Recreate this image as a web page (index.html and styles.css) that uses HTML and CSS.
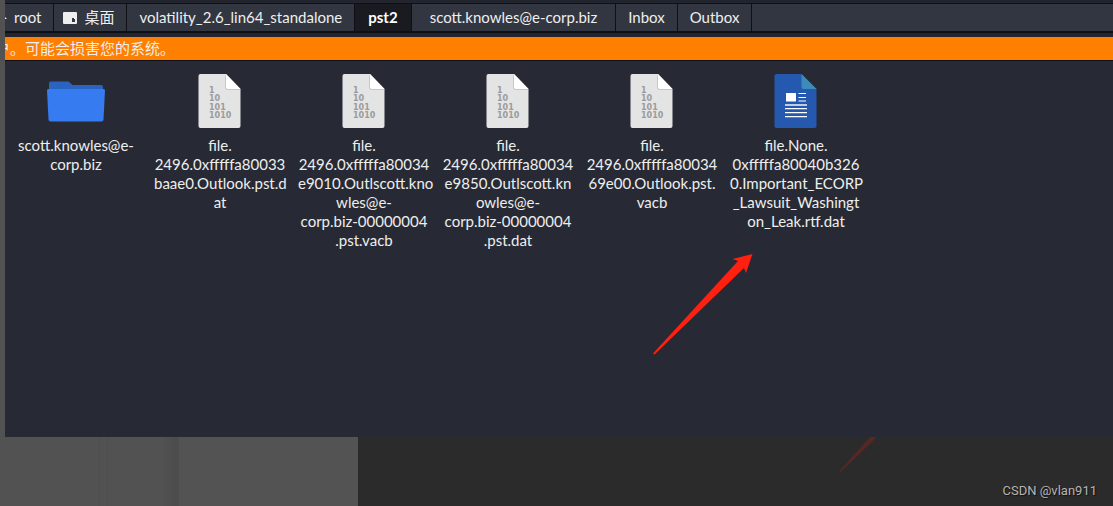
FILE: index.html
```html
<!DOCTYPE html>
<html lang="zh-CN">
<head>
<meta charset="utf-8">
<title>pst2</title>
<link rel="stylesheet" href="styles.css">
</head>
<body>
<svg class="defs" aria-hidden="true">
  <symbol id="binary" viewBox="0 0 64 64">
    <path d="M12.500 5H38l14.500 15V57a2 2 0 0 1-2 2h-38a2 2 0 0 1-2-2V7a2 2 0 0 1 2-2z" fill="#e4e4e4"/>
    <path d="M37 5.500V18a3 3 0 0 0 3 3h12.500z" fill="#c8c8c8"/>
    <path d="M38 5v13a2 2 0 0 0 2 2h12.500z" fill="#fff"/>
    <g class="digits"><text x="21" y="24">1</text><text x="21" y="32">10</text><text x="21" y="41">101</text><text x="21" y="49">1010</text></g>
  </symbol>
</svg>
<main class="window">
  <nav class="tabs">
    <button class="tab home"><svg class="house" viewBox="0 0 14 14"><path d="M7 1 0 8h2v5h4V9h2v4h4V8h2z" fill="#eee"/></svg>root</button>
    <button class="tab desk"><svg class="drive" viewBox="0 0 14 12"><path d="M1 0h12a1 1 0 0 1 1 1v10a1 1 0 0 1-1 1H1a1 1 0 0 1-1-1V1a1 1 0 0 1 1-1z" fill="#eee"/><path d="M9 6h2v1h1v3H9z" fill="#323641"/></svg>桌面</button>
    <button class="tab">volatility_2.6_lin64_standalone</button>
    <button class="tab active">pst2</button>
    <button class="tab wide">scott.knowles@e-corp.biz</button>
    <button class="tab">Inbox</button>
    <button class="tab">Outbox</button>
    <span class="rest"></span>
  </nav>
  <div class="warning"><span class="warning-text">户。可能会损害您的系统。</span></div>
  <section class="files">
    <figure class="file">
      <svg class="icon" viewBox="0 0 64 64"><path d="M5 14.500a2 2 0 0 1 2-2h17.500l4 3.500H57a2 2 0 0 1 2 2V25H5z" fill="#2b63c0"/><path d="M4.500 20h55a1.500 1.500 0 0 1 1.500 1.500l-1.500 29a2 2 0 0 1-2 2h-51a2 2 0 0 1-2-2L3 21.500A1.500 1.500 0 0 1 4.500 20z" fill="#367bf0"/></svg>
      <figcaption>scott.knowles@e-<br>corp.biz</figcaption>
    </figure>
    <figure class="file">
      <svg class="icon"><use href="#binary"/></svg>
      <figcaption>file.<br>2496.0xfffffa80033<br>baae0.Outlook.pst.d<br>at</figcaption>
    </figure>
    <figure class="file">
      <svg class="icon"><use href="#binary"/></svg>
      <figcaption>file.<br>2496.0xfffffa80034<br>e9010.Outlscott.kno<br>wles@e-<br>corp.biz-00000004<br>.pst.vacb</figcaption>
    </figure>
    <figure class="file">
      <svg class="icon"><use href="#binary"/></svg>
      <figcaption>file.<br>2496.0xfffffa80034<br>e9850.Outlscott.kn<br>owles@e-<br>corp.biz-00000004<br>.pst.dat</figcaption>
    </figure>
    <figure class="file">
      <svg class="icon"><use href="#binary"/></svg>
      <figcaption>file.<br>2496.0xfffffa80034<br>69e00.Outlook.pst.<br>vacb</figcaption>
    </figure>
    <figure class="file">
      <svg class="icon" viewBox="0 0 64 64"><path d="M12.500 5H37.500l15 15V57a2 2 0 0 1-2 2h-38a2 2 0 0 1-2-2V7a2 2 0 0 1 2-2z" fill="#2559b0"/><path d="M37.500 5v13a2 2 0 0 0 2 2h13z" fill="#3b8cba"/><g fill="#fff"><path d="M22 24h10v8.500H22zM34.500 24H42v1h-7.500zM34.500 28H42v1h-7.500zM34.500 31.500H42v1h-7.500zM21 39h22v1.200H21zM21 43h22v1.200H21zM21 47h22v1.200H21z"/><path d="M21 35h22v2H21z" opacity=".7"/></g></svg>
      <figcaption>file.None.<br>0xfffffa80040b326<br>0.Important_ECORP<br>_Lawsuit_Washingt<br>on_Leak.rtf.dat</figcaption>
    </figure>
  </section>
  <svg class="arrow" viewBox="0 0 102 102"><path d="M100.500 1 94 20l-2-5L2.500 101.500 1 100.500 86 8 80.500 6z" fill="#ff2010"/></svg>
</main>
<footer class="backdrop">
  <div class="pane first"></div>
  <div class="pane gutter"></div>
  <div class="pane third"></div>
  <div class="pane light"></div>
  <div class="dark">
    <svg class="trace" viewBox="0 0 40 36"><path d="M32 0h7L2 35.500 1 34.500z" fill="#552826"/></svg>
    <span class="credit">CSDN @vlan911</span>
  </div>
</footer>
</body>
</html>
```
FILE: styles.css
```css
* { box-sizing: border-box; }
body {
  margin: 0;
  min-height: 100vh;
  display: flex;
  flex-direction: column;
  background: #525252;
  color: #eee;
  font: 15px/19px Lato, "Noto Sans CJK SC", sans-serif;
  overflow-x: hidden;
}
.defs { position: absolute; width: 0; height: 0; }
.digits { font: bold 8px "DejaVu Sans", sans-serif; fill: #9b9b9b; }
.window {
  position: relative;
  flex: 1;
  margin-left: 5px;
  background: #272a34;
  overflow: hidden;
}
.tabs {
  display: flex;
  height: 37px;
  padding: 3px 0 4px;
  background: #23252e;
}
.tab, .rest {
  border: solid #0e1015;
  border-width: 1px 1px 2px 0;
  background: #323641;
}
.tab {
  flex: none;
  display: flex;
  align-items: center;
  padding: 0 12px;
  color: #eee;
  font: inherit;
  white-space: nowrap;
}
.home { margin-left: -12px; padding-left: 0; gap: 7px; }
.desk { padding-left: 9px; gap: 7px; }
.wide { padding: 0 18px; }
.active { padding: 0 13px; background: #191b20; font-weight: bold; color: #fff; }
.rest { flex: 1; border-right: 0; }
.house { width: 14px; height: 14px; }
.drive { width: 14px; height: 12px; }
.warning {
  height: 24px;
  display: flex;
  align-items: center;
  background: #ff7f00;
  border-bottom: 1px solid #0e1015;
  white-space: nowrap;
}
.warning-text { margin-left: -10px; }
.files {
  display: flex;
  flex-wrap: wrap;
  gap: 12px;
  padding: 8px 5px;
}
.file { width: 132px; margin: 0; text-align: center; }
.icon { display: block; width: 64px; height: 64px; margin: 0 auto 3px; }
.file figcaption { white-space: nowrap; }
.arrow {
  position: absolute;
  left: 647px;
  top: 253px;
  width: 102px;
  height: 102px;
}
.backdrop { display: flex; height: 69px; }
.pane { border-right: 1px solid #4e4e4e; }
.first { width: 100px; }
.gutter { width: 8px; }
.third { width: 71px; background: linear-gradient(90deg, #525252 75%, #4c4c4c); }
.light { width: 179px; background: #535353; border: 0; }
.dark {
  flex: 1;
  display: flex;
  justify-content: flex-end;
  background: #2b2b2c;
}
.trace { width: 40px; height: 36px; margin-right: 124px; }
.credit {
  align-self: flex-end;
  margin: 0 16px 6px 0;
  color: #b4b4b4;
  font: 13px/19px Roboto, sans-serif;
  text-shadow: 1px 1px 1px #111;
}
```
